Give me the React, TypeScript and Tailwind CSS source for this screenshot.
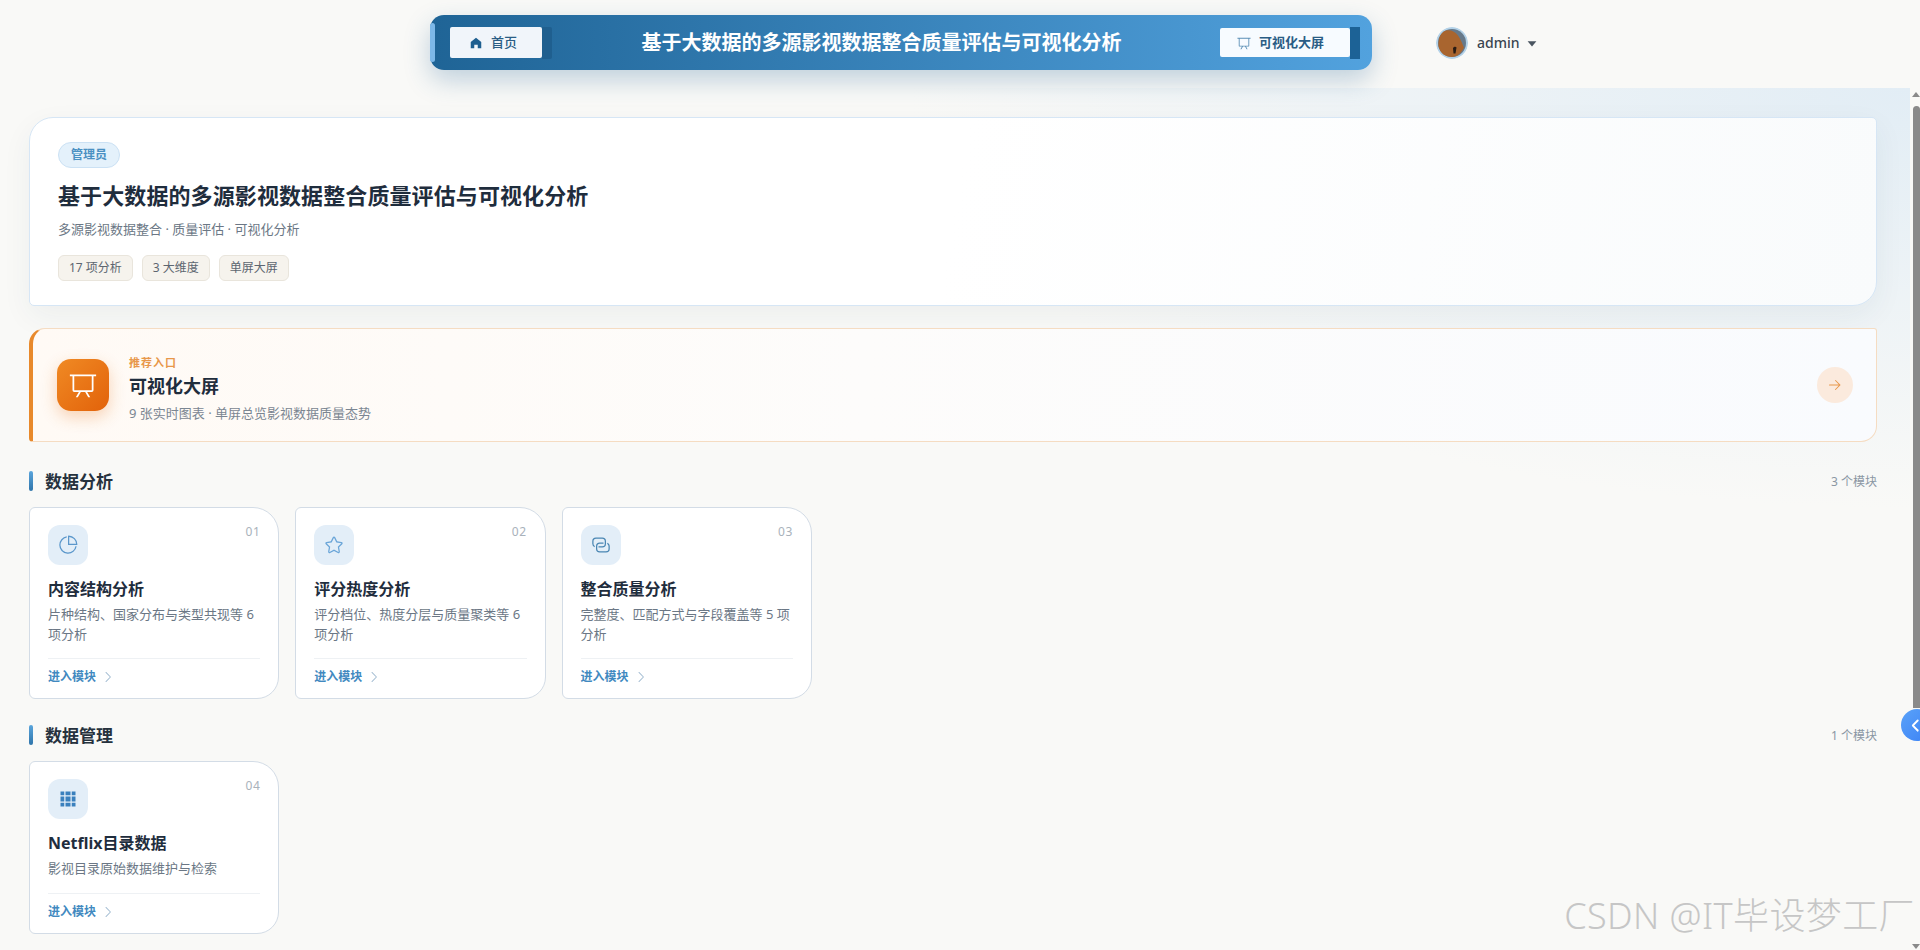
import type { ReactNode } from "react";

const paths = {
  home: "M512 128 128 447.936V896h255.936V640H640v256h255.936V447.936z",
  pie: "M448 68.48v64.832A384.128 384.128 0 0 0 512 896a384.128 384.128 0 0 0 378.688-320h64.768A448.128 448.128 0 0 1 64 512 448.128 448.128 0 0 1 448 68.48z M576 97.28V448h350.72A384.064 384.064 0 0 0 576 97.28zM512 64V33.152A448 448 0 0 1 990.848 512H512z",
  star: "M512 747.84l228.16 119.936a6.4 6.4 0 0 0 9.28-6.72l-43.52-254.08 184.512-179.904a6.4 6.4 0 0 0-3.52-10.88l-255.104-37.12L517.76 147.904a6.4 6.4 0 0 0-11.52 0L392.192 379.072l-255.104 37.12a6.4 6.4 0 0 0-3.52 10.88L318.08 606.976l-43.584 254.08a6.4 6.4 0 0 0 9.28 6.72L512 747.84zM313.6 924.48a70.4 70.4 0 0 1-102.144-74.24l37.888-220.928L88.96 472.96A70.4 70.4 0 0 1 128 352.896l221.76-32.256 99.2-200.96a70.4 70.4 0 0 1 126.208 0l99.2 200.96 221.824 32.256a70.4 70.4 0 0 1 39.04 120.064L774.72 629.376l37.888 220.928a70.4 70.4 0 0 1-102.144 74.24L512 820.096l-198.4 104.32z",
  connection: "M640 384v64H448a128 128 0 0 0-128 128v128a128 128 0 0 0 128 128h320a128 128 0 0 0 128-128V576a128 128 0 0 0-64-110.848V394.88c74.56 26.368 128 97.472 128 181.056v128a192 192 0 0 1-192 192H448a192 192 0 0 1-192-192V576a192 192 0 0 1 192-192z M384 640v-64h192a128 128 0 0 0 128-128V320a128 128 0 0 0-128-128H256a128 128 0 0 0-128 128v128a128 128 0 0 0 64 110.848v70.272A192.064 192.064 0 0 1 64 448V320a192 192 0 0 1 192-192h320a192 192 0 0 1 192 192v128a192 192 0 0 1-192 192z",
  grid: "M640 384v256H384V384zm64 0h192v256H704zm-64 512H384V704h256zm64 0V704h192v192zm-64-768v192H384V128zm64 0h192v192H704zM320 384v256H128V384zm0 512H128V704h192zm0-768v192H128V128z",
  board: "M32 128h960v64H32z M192 192v512h640V192zm-64-64h768v576a64 64 0 0 1-64 64H192a64 64 0 0 1-64-64z M322.176 960H248.32l144.64-250.56 55.424 32zm453.888 0h-73.856L576 741.44l55.424-32z",
  chevron: "M340.864 149.312a30.592 30.592 0 0 0 0 42.752L652.736 512 340.864 831.872a30.592 30.592 0 0 0 0 42.752 29.12 29.12 0 0 0 41.728 0L714.24 534.336a32 32 0 0 0 0-44.672L382.592 149.376a29.12 29.12 0 0 0-41.728 0z",
  arrow: "M754.752 480H160a32 32 0 1 0 0 64h594.752L521.344 777.344a32 32 0 0 0 45.312 45.312l288-288a32 32 0 0 0 0-45.312l-288-288a32 32 0 1 0-45.312 45.312z",
  caret: "m192 384 320 384 320-384z",
};

function Icon({ d, className }: { d: string; className?: string }) {
  return (
    <svg viewBox="0 0 1024 1024" className={className} fill="currentColor">
      <path d={d} />
    </svg>
  );
}

const analysisModules = [
  { no: "01", icon: paths.pie, tint: "text-[#5b97cb]", title: "内容结构分析", desc: "片种结构、国家分布与类型共现等 6 项分析" },
  { no: "02", icon: paths.star, tint: "text-[#6aa5d8]", title: "评分热度分析", desc: "评分档位、热度分层与质量聚类等 6 项分析" },
  { no: "03", icon: paths.connection, tint: "text-[#4a86b3]", title: "整合质量分析", desc: "完整度、匹配方式与字段覆盖等 5 项分析" },
];

function ModuleCard({ no, icon, tint, title, desc }: { no: string; icon: string; tint: string; title: string; desc: string }) {
  return (
    <div className="rounded-tl-[6px] rounded-bl-[6px] rounded-tr-[26px] rounded-br-[22px] border border-[#d3dce6] bg-white px-[18px] pt-[17px] pb-[12px]">
      <div className="flex items-start justify-between">
        <div className={`flex h-10 w-10 items-center justify-center rounded-[12px] bg-[#e3eef8] ${tint}`}>
          <Icon d={icon} className="h-5 w-5" />
        </div>
        <span className="-mt-px text-xs leading-4 tracking-[0.5px] text-[#a9b2bb]">{no}</span>
      </div>
      <h3 className="mt-3 text-base leading-6 font-bold text-[#1f2d3d]">{title}</h3>
      <p className="mt-1 text-[13px] leading-[19.5px] text-[#6b7785]">{desc}</p>
      <div className="mt-[14px] flex items-center gap-[5px] border-t border-[#eef1f4] pt-[9px] text-xs leading-[18px] font-semibold text-[#4189c0]">
        进入模块
        <Icon d={paths.chevron} className="h-3.5 w-3.5 text-[#9db8cf]" />
      </div>
    </div>
  );
}

function Section({ title, count, className, children }: { title: string; count: string; className: string; children: ReactNode }) {
  return (
    <section className={className}>
      <div className="flex h-5 items-center justify-between">
        <div className="flex items-center gap-3">
          <span className="h-5 w-1 rounded-sm bg-[linear-gradient(180deg,#5aa5dc,#2f75aa)]" />
          <h2 className="pt-px text-[17px] leading-5 font-bold text-[#26323e]">{title}</h2>
        </div>
        <span className="pt-px text-xs text-[#8a96a3]">{count}</span>
      </div>
      <div className="mt-4 grid grid-cols-7 gap-4">{children}</div>
    </section>
  );
}

export default function App() {
  return (
    <div className="relative flex h-screen flex-col overflow-hidden bg-[#f9f9f7] font-['Noto_Sans','Noto_Sans_CJK_SC',sans-serif]">
      <header className="z-10 flex h-[88px] shrink-0 items-start pt-[15px] pl-[430px]">
        <div className="relative flex h-[55px] w-[942px] items-center rounded-[14px] bg-[linear-gradient(90deg,#1f6496,#52a2de)] pr-[12px] pl-[20px] shadow-[0_10px_26px_rgba(40,100,150,0.28)]">
          <span className="absolute top-2 left-0 h-[39px] w-[5px] rounded-[3px] bg-[#7db8e8]" />
          <div className="flex items-center">
            <div className="flex h-[31px] w-[92px] items-center justify-center gap-2 rounded-[2px] bg-[#f1f5fa] pr-[6px] text-[13px] font-medium text-[#2a5d85]">
              <Icon d={paths.home} className="h-3.5 w-3.5 text-[#1e5f90]" />
              首页
            </div>
            <span className="h-8 w-[10px] rounded-r-[2px] bg-[#1f5f8f]" />
          </div>
          <div className="flex-1 pr-[9px] text-center text-[20px] font-bold text-white">基于大数据的多源影视数据整合质量评估与可视化分析</div>
          <div className="flex items-center">
            <div className="flex h-[29px] w-[130px] items-center justify-center gap-2 rounded-[2px] bg-[#f7fbff] pr-[9px] text-[13px] font-bold text-[#2a5d85]">
              <Icon d={paths.board} className="h-3.5 w-3.5 text-[#5b8fb6]" />
              可视化大屏
            </div>
            <span className="h-8 w-[10px] bg-[#1c6296]" />
          </div>
        </div>
        <div className="ml-[64px] flex h-[56px] items-center">
          <svg viewBox="0 0 32 32" className="h-8 w-8 rounded-full">
            <circle cx="16" cy="16" r="16" fill="#b4d2e8" />
            <circle cx="16" cy="16" r="14" fill="#66798a" />
            <path d="M2.5 19C2 11 5 5 10 3.5c5-1 9 1 12 5 3 4 4 8 6 12-3 6-7 9.500-12 9.500C9 30 4 26 2.500 19z" fill="#a9652f" />
            <path d="M17 21c1-1.500 3-1.500 3.500-.5l-1 6h-2z" fill="#2a1c14" />
          </svg>
          <span className="ml-[9px] text-sm font-medium text-[#3a4550]">admin</span>
          <Icon d={paths.caret} className="ml-[5px] h-3.5 w-3.5 text-[#4a5560]" />
        </div>
      </header>

      <div className="flex min-h-0 flex-1">
        <main className="min-w-0 flex-1 overflow-hidden bg-[radial-gradient(1000px_420px_at_100%_0%,#e2edf5,#f9f9f7)] pt-[29px] pr-[33px] pl-[29px]">
          <div className="h-[189px] rounded-tl-[24px] rounded-tr-[5px] rounded-br-[24px] rounded-bl-[5px] border border-[#d6e6f5] bg-[linear-gradient(100deg,#ffffff_50%,#f9fbfc)] pt-6 pl-7 shadow-[0_10px_30px_rgba(30,60,90,0.06)]">
            <span className="flex h-[26px] w-[62px] items-center justify-center rounded-full border border-[#cbe1f4] bg-[#e4f1fb] text-xs font-semibold text-[#4a90c2]">管理员</span>
            <h1 className="mt-3 text-[22px] leading-[30px] font-bold tracking-[0.1px] text-[#1f2d3d]">基于大数据的多源影视数据整合质量评估与可视化分析</h1>
            <p className="mt-[9px] text-[13px] leading-5 text-[#6b7785]">多源影视数据整合 · 质量评估 · 可视化分析</p>
            <div className="mt-[16px] flex gap-[9px]">
              {["17 项分析", "3 大维度", "单屏大屏"].map((t) => (
                <span key={t} className="flex h-[26px] items-center rounded-[6px] border border-[#e9e5dc] bg-[#f6f3ed] px-[10px] text-xs text-[#5d6670]">{t}</span>
              ))}
            </div>
          </div>

          <div className="mt-[22px] flex h-[114px] items-center rounded-tl-[16px] rounded-tr-[3px] rounded-br-[16px] rounded-bl-[4px] border border-l-4 border-[#f5dcc2] border-l-[#e8892b] bg-[linear-gradient(90deg,#fffaf5,#fdfcfb_45%,#f9fbfe)] pr-[23px] pl-[24px]">
            <div className="flex h-[52px] w-[52px] items-center justify-center rounded-[14px] bg-[linear-gradient(135deg,#f08a24,#e2620a)] text-white shadow-[0_6px_16px_rgba(232,120,30,0.3)]">
              <Icon d={paths.board} className="h-7 w-7" />
            </div>
            <div className="ml-5 flex-1 pt-2">
              <div className="text-[11px] leading-[14px] font-bold tracking-[1px] text-[#e8974a]">推荐入口</div>
              <div className="mt-[3px] text-lg leading-[26px] font-bold text-[#1f2d3d]">可视化大屏</div>
              <div className="mt-[4px] text-[13px] leading-5 text-[#7b8692]">9 张实时图表 · 单屏总览影视数据质量态势</div>
            </div>
            <div className="flex h-9 w-9 items-center justify-center rounded-full bg-[#fbeadd] text-[#e8974a]">
              <Icon d={paths.arrow} className="h-4 w-4" />
            </div>
          </div>

          <Section title="数据分析" count="3 个模块" className="mt-[29px]">
            {analysisModules.map((m) => (
              <ModuleCard key={m.no} {...m} />
            ))}
          </Section>

          <Section title="数据管理" count="1 个模块" className="mt-[26px]">
            <ModuleCard no="04" icon={paths.grid} tint="text-[#3a80bd]" title="Netflix目录数据" desc="影视目录原始数据维护与检索" />
          </Section>
        </main>

        <div className="flex w-[10px] shrink-0 flex-col items-end bg-[#f9f9f7]">
          <span className="mt-[4px] h-0 w-0 border-x-[4px] border-b-[5px] border-x-transparent border-b-[#8a8a8a]" />
          <span className="mt-[9px] h-[602px] w-[7px] rounded-t-[4px] bg-[#8a8a8a]" />
          <span className="mt-auto mb-[1px] h-0 w-0 border-x-[4px] border-t-[5px] border-x-transparent border-t-[#8a8a8a]" />
        </div>
      </div>

      <div className="absolute top-[709px] right-[-13px] flex h-8 w-8 items-center rounded-full bg-[linear-gradient(135deg,#5aa2f8,#3b82f6)] pl-[7px] text-white">
        <Icon d={paths.chevron} className="h-[15px] w-[15px] rotate-180 stroke-current stroke-[70]" />
      </div>
      <div className="pointer-events-none absolute top-[891px] right-[5px] text-[36px] leading-[50px] font-light tracking-[0.4px] text-[#c6c6c6]">CSDN @IT毕设梦工厂</div>
    </div>
  );
}
